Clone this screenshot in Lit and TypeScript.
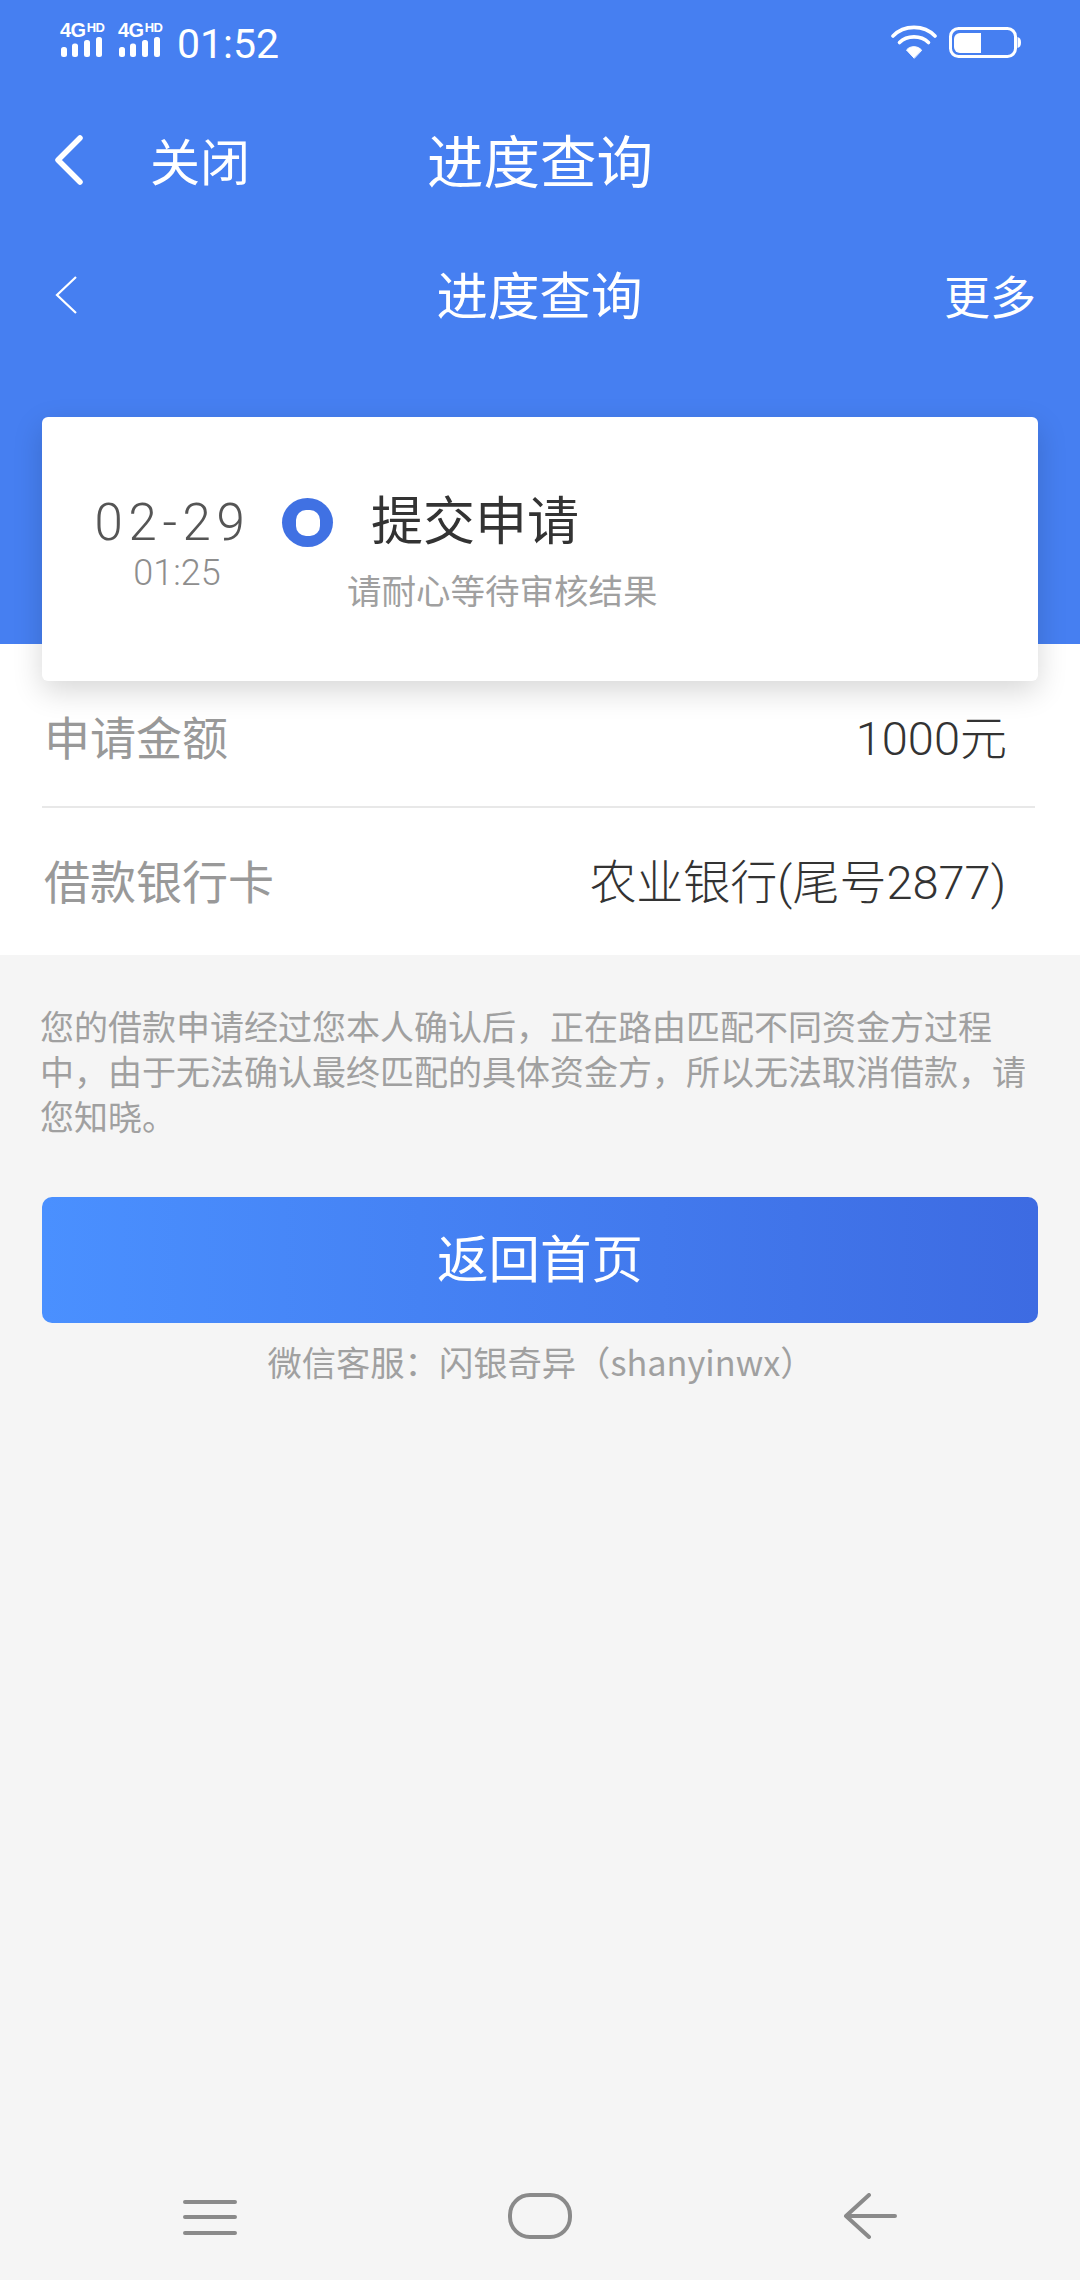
import { LitElement, html, css } from "lit";
import { customElement } from "lit/decorators.js";

@customElement("app-root")
export class AppRoot extends LitElement {
  static styles = css`
    :host {
      display: flex;
      flex-direction: column;
      width: 1080px;
      height: 2280px;
      background: #f5f5f5;
      font-family: "Noto Sans CJK SC", "Noto Sans", sans-serif;
      overflow: hidden;
    }
    svg { display: block; flex: none; }
    .header { height: 644px; background: #467ff1; color: #fff; box-sizing: border-box; }
    .status { height: 84px; padding: 21px 59px 0 60px; box-sizing: border-box; display: flex; align-items: flex-start; }
    .net { position: relative; width: 45px; height: 37px; margin-right: 13px; }
    .net b { position: absolute; left: 0; top: -1px; font: 700 20px/20px "Liberation Sans", sans-serif; letter-spacing: -0.5px; white-space: nowrap; }
    .net b sup { font-size: 13px; line-height: 0; vertical-align: 5px; margin-left: 1px; }
    .time { font: 400 41px/48px Roboto, sans-serif; margin-left: 1px; margin-top: -1px; }
    .status-right { margin-left: auto; display: flex; gap: 12px; margin-top: 4px; }
    .bar { position: relative; display: flex; align-items: center; }
    .bar1 { height: 112px; padding: 0 55px; margin-top: 20px; }
    .bar1 .t { font-size: 50px; margin-left: 67px; line-height: 60px; margin-top: -2px; }
    .title { position: absolute; left: 0; right: 0; text-align: center; }
    .bar1 .title { font-size: 56.5px; line-height: 70px; margin-top: -4px; }
    .bar2 { height: 70px; padding: 0 44px 0 55px; margin-top: 42px; justify-content: space-between; }
    .bar2 .chev { margin-top: 3px; }
    .bar2 .title { font-size: 51.5px; line-height: 70px; margin-left: -1px; }
    .bar2 .more { font-size: 46px; line-height: 60px; margin-top: 1px; }
    .sheet { background: #fff; height: 311px; padding: 0 42px; box-sizing: border-box; }
    .card {
      height: 264px; margin-top: -227px; position: relative; background: #fff; border-radius: 6px;
      box-shadow: 0 10px 30px rgba(0, 0, 0, 0.16); display: flex; box-sizing: border-box;
    }
    .when { width: 240px; display: flex; flex-direction: column; align-items: center; padding-top: 76px; box-sizing: border-box; }
    .date { font: 300 51px/60px Roboto, sans-serif; color: #555; letter-spacing: 5.6px; white-space: nowrap; margin-left: 21px; }
    .clock { font: 300 36px/40px Roboto, sans-serif; color: #8e8e8e; margin-left: 30px; }
    .dot { width: 51px; height: 49px; margin-top: 81px; flex: none; box-sizing: border-box; border-radius: 50%; background: #4071e3; display: flex; align-items: center; justify-content: center; }
    .dot i { display: block; width: 24px; height: 26px; background: #fff; border-radius: 10px; }
    .info { position: relative; flex: 1; }
    .step { font-size: 52px; line-height: 70px; color: #333; margin: 66px 0 0 38px; }
    .hint { font-size: 34.5px; line-height: 46px; color: #a0a0a0; margin: 13px 0 0 14px; white-space: nowrap; }
    .row { display: flex; justify-content: space-between; align-items: center; font-size: 46px; box-sizing: border-box; }
    .row .k { color: #999; }
    .row .v { color: #333; font-family: Roboto, "Noto Sans CJK SC", sans-serif; font-size: 47px; font-weight: 300; }
    .row1 { height: 127px; padding: 0 28px 18px 2px; border-bottom: 2px solid #e8e8e8; width: 993px; }
    .row2 { height: 147px; padding: 0 29px 6px 2px; width: 993px; }
    .note { margin: 48px 32px 0 40px; font-size: 34px; line-height: 45px; color: #a0a0a0; height: 135px; }
    .btn {
      margin: 59px 42px 0; height: 126px; border-radius: 10px; color: #fff; font-size: 51.5px;
      display: flex; align-items: center; justify-content: center; padding-bottom: 10px; box-sizing: border-box;
      background: linear-gradient(90deg, #4a90ff, #3d6be2);
    }
    .wx { text-align: center; font-size: 34.3px; line-height: 46px; color: #a0a0a0; margin: 15px 0 0 2px; }
    .nav { margin-top: auto; height: 85px; display: grid; grid-template-columns: repeat(3, 330px); padding: 0 45px; align-items: start; }
    .nav > div { display: flex; justify-content: center; padding-top: 5px; }
    .up { margin-top: -7px; }
  `;

  private sig() {
    return html`<div class="net"><b>4G<sup>HD</sup></b>
      <svg style="position:absolute;left:0;top:16px" width="43" height="21" viewBox="0 0 43 21" fill="#fff">
        <rect x="1" y="10" width="6" height="10" rx="2.5"/>
        <rect x="12" y="6.5" width="6" height="13.5" rx="2.5"/>
        <rect x="24" y="3" width="6" height="17" rx="2.5"/>
        <rect x="36" y="0" width="6" height="20" rx="2.5"/>
      </svg></div>`;
  }

  render() {
    return html`
      <div class="header">
        <div class="status">
          ${this.sig()}${this.sig()}
          <div class="time">01:52</div>
          <div class="status-right">
            <svg width="46" height="34" viewBox="0 0 46 34" fill="none" stroke="#fff" stroke-width="3.6" stroke-linecap="round">
              <path d="M2 11C13 -0.5 33 -0.5 44 11"/>
              <path d="M8.5 17.5C16 10 30 10 37.5 17.5"/>
              <path d="M23 33l-7.5-8C19 20.500 27 20.500 30.500 25Z" fill="#fff" stroke-width="1" stroke-linejoin="round"/>
            </svg>
            <svg width="72" height="32" viewBox="0 0 72 32" fill="none" style="margin-top:2px">
              <rect x="1.500" y="1.500" width="65" height="28" rx="8" stroke="#fff" stroke-width="3"/>
              <path d="M11 6h21v20H11a6 6 0 0 1-6-6v-8a6 6 0 0 1 6-6Z" fill="#fff"/>
              <path d="M68.500 10c2.500.5 3.500 2.500 3.500 5.500s-1 5-3.500 5.500Z" fill="#fff"/>
            </svg>
          </div>
        </div>
        <div class="bar bar1">
          <svg width="28" height="50" viewBox="0 0 28 50" fill="none" stroke="#fff" stroke-width="5.500" stroke-linecap="round" stroke-linejoin="round"><path d="M25 3L3 25l22 22"/></svg>
          <span class="t">关闭</span>
          <div class="title">进度查询</div>
        </div>
        <div class="bar bar2">
          <svg class="chev" width="22" height="38" viewBox="0 0 22 38" fill="none" stroke="#fff" stroke-width="2.200"><path d="M21 1L2 19l19 18"/></svg>
          <div class="title">进度查询</div>
          <span class="more">更多</span>
        </div>
      </div>
      <div class="sheet">
        <div class="card">
          <div class="when"><div class="date">02-29</div><div class="clock">01:25</div></div>
          <div class="dot"><i></i></div>
          <div class="info">
            <div class="step">提交申请</div>
            <div class="hint">请耐心等待审核结果</div>
          </div>
        </div>
        <div class="row row1"><span class="k">申请金额</span><span class="v">1000元</span></div>
        <div class="row row2"><span class="k">借款银行卡</span><span class="v">农业银行(尾号2877)</span></div>
      </div>
      <div class="note">您的借款申请经过您本人确认后，正在路由匹配不同资金方过程中，由于无法确认最终匹配的具体资金方，所以无法取消借款，请您知晓。</div>
      <div class="btn">返回首页</div>
      <div class="wx">微信客服：闪银奇异（shanyinwx）</div>
      <div class="nav">
        <div>
          <svg width="54" height="36" viewBox="0 0 54 36" stroke="#8a8a8a" stroke-width="4" stroke-linecap="round"><path d="M2 2h50M2 17h50M2 33h50"/></svg>
        </div>
        <div>
          <svg class="up" width="64" height="46" viewBox="0 0 64 46" fill="none" stroke="#8a8a8a" stroke-width="4"><rect x="2" y="2" width="60" height="42" rx="20"/></svg>
        </div>
        <div>
          <svg class="up" width="54" height="46" viewBox="0 0 54 46" fill="none" stroke="#8a8a8a" stroke-width="4" stroke-linecap="round" stroke-linejoin="round"><path d="M26 2L3 23l23 21M3 23h49"/></svg>
        </div>
      </div>
    `;
  }
}
